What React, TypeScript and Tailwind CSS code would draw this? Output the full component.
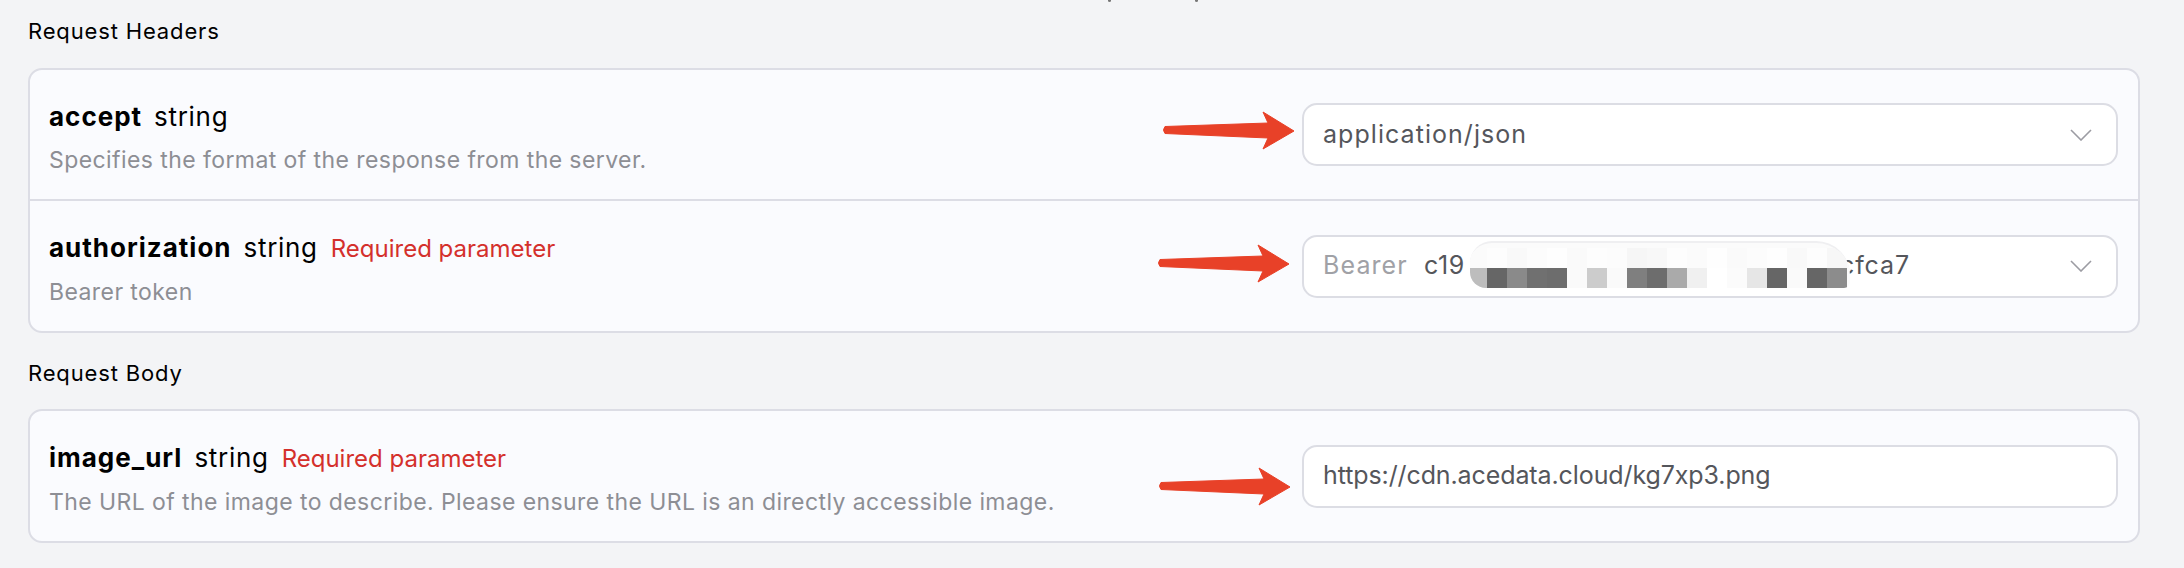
import React from "react";

const font = { fontFamily: "Inter, 'Noto Sans', sans-serif" };

function Arrow({ className }: { className: string }) {
  return (
    <svg
      className={className}
      width="140"
      height="46"
      viewBox="0 0 140 46"
      fill="none"
    >
      <path
        d="M5 18.5 L108 15 L103 4 L134 23 L103 41 L108 30 L5 25.5 Q2 22 5 18.5 Z"
        fill="#e84128"
        stroke="#e84128"
        strokeWidth="1"
        strokeLinejoin="round"
      />
    </svg>
  );
}

function Chevron() {
  return (
    <svg width="22" height="12" viewBox="0 0 22 12" fill="none" className="shrink-0">
      <path d="M1 1 L11 11 L21 1" stroke="#9c9ca3" strokeWidth="1.6" fill="none" />
    </svg>
  );
}

const lower = [
  "#666666", "#8a8a8a", "#707070", "#6d6d6d", "#fafafa", "#cccccc", "#fafafa", "#7f7f7f",
  "#6d6d6d", "#aaaaaa", "#f0f0f0", "#ffffff", "#fbfbfb", "#e6e6e6", "#666666", "#fafafa",
  "#666666", "#8c8c8c",
];
const upper = [
  "#fdfdfd", "#f9f9f9", "#fcfcfc", "#fefefe", "#fafafa", "#fdfdfd", "#fcfcfc", "#f6f6f6",
  "#f8f8f8", "#fdfdfd", "#fbfbfb", "#fefefe", "#fafafa", "#fcfcfc", "#fefefe", "#f9f9f9",
  "#fdfdfd", "#f7f7f7",
];

function Mosaic() {
  return (
    <div className="h-[47px] w-[380px] overflow-hidden rounded-tl-[22px] rounded-tr-[34px] rounded-bl-[16px] rounded-br-[6px] bg-[#fbfbfb] border-t-[2px] border-[#efeff1]">
      <div className="h-[5px]" />
      <div className="flex h-[20px]">
        <div className="h-full w-[17px] bg-[#fbfbfb]" />
        {upper.map((c, i) => (
          <div key={i} className="h-full w-[20px]" style={{ background: c }} />
        ))}
      </div>
      <div className="flex h-[20px]">
        <div className="h-full w-[17px] bg-[#bdbdbd]" />
        {lower.map((c, i) => (
          <div key={i} className="h-full w-[20px]" style={{ background: c }} />
        ))}
      </div>
    </div>
  );
}

function Row({
  name,
  required,
  desc,
  children,
  divider,
}: {
  name: string;
  required?: boolean;
  desc: string;
  children: React.ReactNode;
  divider?: boolean;
}) {
  return (
    <div
      className={
        "flex items-center pl-[19px] pr-[20px] " +
        (divider ? "border-b-[2px] border-[#dcdde5]" : "")
      }
    >
      <div className="flex-1 pt-[31px] pb-[24px]">
        <div className="flex items-baseline leading-[32px]">
          <span className="text-[26px] font-bold text-black tracking-[1px]">{name}</span>
          <span className="ml-[12px] text-[26px] text-black tracking-[0.7px]">string</span>
          {required && (
            <span className="ml-[13px] text-[24px] text-[#d4302c] tracking-[0px]">
              Required parameter
            </span>
          )}
        </div>
        <div className="mt-[12px] text-[23px] leading-[30px] text-[#8d8e94] tracking-[0.42px]">
          {desc}
        </div>
      </div>
      {children}
    </div>
  );
}

function Box({ children, chevron }: { children: React.ReactNode; chevron?: boolean }) {
  return (
    <div className="flex h-[63px] w-[816px] shrink-0 items-center rounded-[15px] border-[2px] border-[#dcdde4] bg-white pl-[19px] pr-[24px]">
      <div className="flex flex-1 items-center whitespace-nowrap text-[25px] text-[#55565b]">
        {children}
      </div>
      {chevron && <Chevron />}
    </div>
  );
}

export default function App() {
  return (
    <div className="relative min-h-[568px] w-[2184px] bg-[#f3f4f6] pl-[28px] pr-[44px]" style={font}>
      <div className="flex h-[3px]">
        <div className="ml-[1080px] h-[2px] w-[3px] rounded-b-full bg-[#777]" />
        <div className="ml-[84px] h-[2px] w-[3px] rounded-b-full bg-[#777]" />
      </div>
      <div className="pt-[14px] text-[22px] leading-[28px] text-black tracking-[0.85px]">Request Headers</div>
      <div className="mt-[23px] rounded-[14px] border-[2px] border-[#dcdde5] bg-[#fafbfe]">
        <Row name="accept" desc="Specifies the format of the response from the server." divider>
          <Box chevron>
            <span className="tracking-[1.05px]">application/json</span>
          </Box>
        </Row>
        <Row name="authorization" required desc="Bearer token">
          <Box chevron>
            <span className="w-[101px] shrink-0 text-[#a0a1a6] tracking-[1.1px]">Bearer</span>
            <span className="w-[46px] shrink-0 tracking-[0.6px]">c19</span>
            <div className="relative z-10 -mt-[4px] shrink-0">
              <Mosaic />
            </div>
            <span className="-ml-[10px] tracking-[0.9px]">cfca7</span>
          </Box>
        </Row>
      </div>
      <div className="mt-[26px] text-[22px] leading-[28px] text-black tracking-[0.85px]">Request Body</div>
      <div className="mt-[22px] rounded-[14px] border-[2px] border-[#dcdde5] bg-[#fafbfe]">
        <Row
          name="image_url"
          required
          desc="The URL of the image to describe. Please ensure the URL is an directly accessible image."
        >
          <Box>
            <span className="tracking-[-0.1px]">https://cdn.acedata.cloud/kg7xp3.png</span>
          </Box>
        </Row>
      </div>

      <Arrow className="absolute left-[1160px] top-[108px]" />
      <Arrow className="absolute left-[1155px] top-[241px]" />
      <Arrow className="absolute left-[1156px] top-[464px]" />
    </div>
  );
}
